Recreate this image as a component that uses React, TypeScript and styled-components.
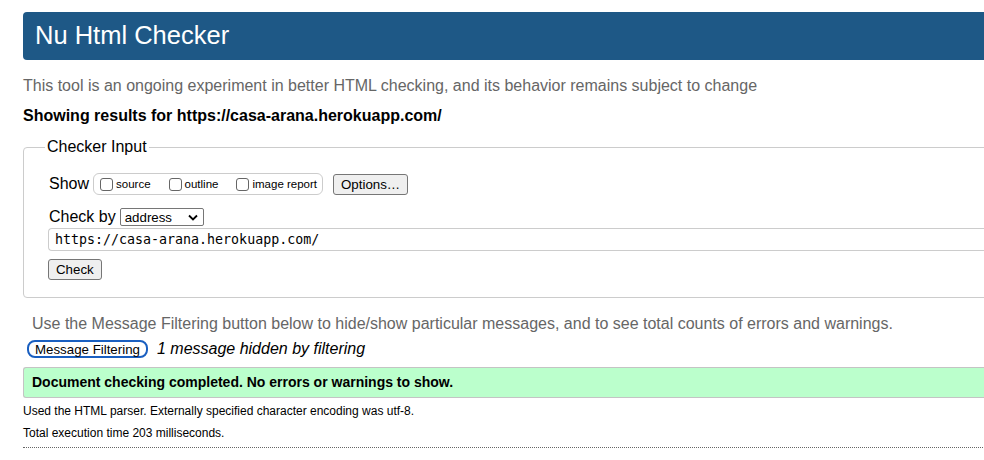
import React from "react";
import styled, { createGlobalStyle } from "styled-components";

const Global = createGlobalStyle`
  html, body { margin: 0; padding: 0; background: #fff; overflow: hidden; }
  body { font-family: "Liberation Sans", Arial, sans-serif; color: #000; }
`;

const Page = styled.div`
  width: 1100px;
  padding: 12px 0 0 23px;
`;

const Header = styled.h1`
  margin: 0;
  height: 48px;
  background: #1e5886;
  border-radius: 4px;
  color: #fff;
  font-size: 25.5px;
  font-weight: normal;
  line-height: 47px;
  padding-left: 12px;
`;

const Intro = styled.p`
  margin: 16px 0 0;
  font-size: 16px;
  line-height: 20px;
  color: #666;
`;

const Showing = styled.p`
  margin: 10px 0 0;
  font-size: 16px;
  line-height: 20px;
  font-weight: bold;
`;

const Fieldset = styled.fieldset`
  margin: 12px 0 0;
  padding: 17px 0 17px 25px;
  border: 1px solid #ccc;
  border-radius: 4px;
`;

const Legend = styled.legend`
  font-size: 16px;
  padding: 0 2px;
  margin-left: -4px;
`;

const Row = styled.div<{ $mt?: number }>`
  display: flex;
  align-items: center;
  margin-top: ${(p) => p.$mt ?? 0}px;
  font-size: 16px;
`;

const Label = styled.span`
  font-size: 16px;
  margin-right: 4px;
`;

const CheckGroup = styled.div`
  display: flex;
  align-items: center;
  height: 20px;
  padding: 0 5px 0 6px;
  border: 1px solid #ccc;
  border-radius: 6px;
  margin-right: 10px;
`;

const CheckItem = styled.label`
  display: flex;
  align-items: center;
  font-size: 11.5px;
  color: #000;
  margin-right: 18px;
  &:last-child { margin-right: 0; }
`;

const Box = styled.span`
  width: 11px;
  height: 11px;
  border: 1px solid #666;
  border-radius: 3px;
  margin-right: 3px;
  background: #fff;
`;

const Button = styled.button<{ $focus?: boolean }>`
  font-family: "Liberation Sans", Arial, sans-serif;
  font-size: 13.3px;
  height: ${(p) => (p.$focus ? 18 : 21)}px;
  padding: 0 ${(p) => (p.$focus ? 6 : 7)}px;
  color: #000;
  background: ${(p) => (p.$focus ? "#fff" : "#efefef")};
  border: ${(p) => (p.$focus ? "2px solid #1a5fc0" : "1px solid #767676")};
  border-radius: ${(p) => (p.$focus ? "8px" : "3px")};
`;

const Select = styled.div`
  display: flex;
  align-items: center;
  justify-content: space-between;
  width: 84px;
  height: 18px;
  border: 1px solid #767676;
  border-radius: 2px;
  font-size: 13.3px;
  padding: 0 5px 0 4px;
  box-sizing: border-box;
  background: #fff;
`;

const UrlInput = styled.div`
  height: 21px;
  border: 1px solid #ccc;
  border-right: none;
  border-radius: 4px 0 0 4px;
  font-family: "DejaVu Sans Mono", monospace;
  font-size: 13.3px;
  line-height: 21px;
  padding-left: 6px;
  margin: 2px 0 0 -1px;
`;

const Hint = styled.p`
  margin: 16px 0 0 9px;
  font-size: 16px;
  line-height: 20px;
  color: #666;
`;

const FilterRow = styled.div`
  display: flex;
  align-items: center;
  margin: 6px 0 0 4px;
  gap: 9px;
`;

const Hidden = styled.em`
  font-size: 16px;
`;

const Success = styled.div`
  margin-top: 9px;
  height: 29px;
  background: #bbffcc;
  border: 1px solid #c4c4c4;
  border-right: none;
  border-radius: 3px 0 0 3px;
  font-size: 14px;
  font-weight: bold;
  line-height: 29px;
  padding-left: 8px;
`;

const Small = styled.p<{ $mt: number }>`
  margin: ${(p) => p.$mt}px 0 0;
  font-size: 12px;
  line-height: 14px;
`;

const Divider = styled.hr`
  margin: 7px 0 0;
  border: none;
  border-top: 1px dotted #666;
`;

const checks = ["source", "outline", "image report"];

export default function App() {
  return (
    <>
      <Global />
      <Page>
        <Header>Nu Html Checker</Header>
        <Intro>
          This tool is an ongoing experiment in better HTML checking, and its behavior remains subject to change
        </Intro>
        <Showing>Showing results for https://casa-arana.herokuapp.com/</Showing>
        <Fieldset>
          <Legend>Checker Input</Legend>
          <Row>
            <Label>Show</Label>
            <CheckGroup>
              {checks.map((c) => (
                <CheckItem key={c}>
                  <Box />
                  {c}
                </CheckItem>
              ))}
            </CheckGroup>
            <Button>Options…</Button>
          </Row>
          <Row $mt={13}>
            <Label>Check by</Label>
            <Select>
              address
              <svg width="10" height="7" viewBox="0 0 10 7">
                <path d="M1 1.5 L5 5.5 L9 1.5" fill="none" stroke="#000" strokeWidth="1.8" />
              </svg>
            </Select>
          </Row>
          <UrlInput>https://casa-arana.herokuapp.com/</UrlInput>
          <Row $mt={8}>
            <Button style={{ marginLeft: -1 }}>Check</Button>
          </Row>
        </Fieldset>
        <Hint>
          Use the Message Filtering button below to hide/show particular messages, and to see total counts of errors and warnings.
        </Hint>
        <FilterRow>
          <Button $focus>Message Filtering</Button>
          <Hidden>1 message hidden by filtering</Hidden>
        </FilterRow>
        <Success>Document checking completed. No errors or warnings to show.</Success>
        <Small $mt={6}>Used the HTML parser. Externally specified character encoding was utf-8.</Small>
        <Small $mt={8}>Total execution time 203 milliseconds.</Small>
        <Divider />
      </Page>
    </>
  );
}
